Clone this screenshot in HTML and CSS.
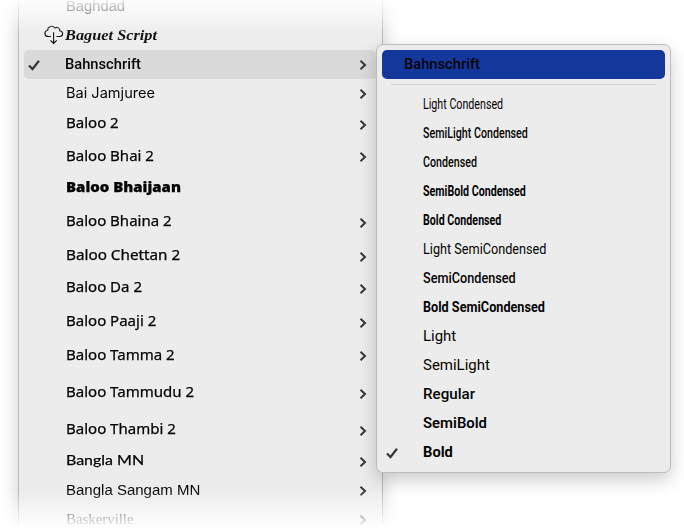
FILE: index.html
```
<!DOCTYPE html>
<html lang="en">
<head>
<meta charset="utf-8">
<title>Font menu</title>
<link rel="stylesheet" href="styles.css">
</head>
<body>
<svg class="defs" aria-hidden="true">
  <symbol id="chevron" viewBox="0 0 8 12"><path d="M1.5 1.800 6 6l-4.500 4.200" fill="none" stroke="currentColor" stroke-width="2"/></symbol>
  <symbol id="check" viewBox="0 0 12 12"><path d="M1 6.500 4.500 10 11 1.800" fill="none" stroke="currentColor" stroke-width="2.200"/></symbol>
  <symbol id="cloud" viewBox="0 0 20 20"><path d="M7 11.500H4.200C.2 11.500-.3 6 3.700 5.200C3.600 1.500 8.500-.3 11 3C13.500 1.500 16 3.300 15.700 5.700C19.700 6.300 19.500 11.500 15.800 11.500H12.500M9.600 7.300V18.300M6.500 15.300l3.100 3.200 3.100-3.200" fill="none" stroke="currentColor" stroke-width="1.100"/></symbol>
</svg>
<div class="stage">
  <div class="fade">
    <ul class="menu">
      <li class="item"><span class="label baghdad">Baghdad</span></li>
      <li class="item"><svg class="cloud"><use href="#cloud"/></svg><span class="label script">Baguet Script</span></li>
      <li class="item current"><svg class="check"><use href="#check"/></svg><span class="label din">Bahnschrift</span><svg class="chevron"><use href="#chevron"/></svg></li>
      <li class="item"><span class="label jam">Bai Jamjuree</span><svg class="chevron"><use href="#chevron"/></svg></li>
      <li class="item h32"><span class="label baloo">Baloo 2</span><svg class="chevron"><use href="#chevron"/></svg></li>
      <li class="item h32"><span class="label baloo low">Baloo Bhai 2</span><svg class="chevron"><use href="#chevron"/></svg></li>
      <li class="item h31"><span class="label baloo heavy">Baloo Bhaijaan</span></li>
      <li class="item h38"><span class="label baloo">Baloo Bhaina 2</span><svg class="chevron"><use href="#chevron"/></svg></li>
      <li class="item h30"><span class="label baloo wide">Baloo Chettan 2</span><svg class="chevron"><use href="#chevron"/></svg></li>
      <li class="item h34"><span class="label baloo">Baloo Da 2</span><svg class="chevron"><use href="#chevron"/></svg></li>
      <li class="item h34"><span class="label baloo">Baloo Paaji 2</span><svg class="chevron"><use href="#chevron"/></svg></li>
      <li class="item h33"><span class="label baloo">Baloo Tamma 2</span><svg class="chevron"><use href="#chevron"/></svg></li>
      <li class="item h42"><span class="label baloo">Baloo Tammudu 2</span><svg class="chevron"><use href="#chevron"/></svg></li>
      <li class="item h32"><span class="label baloo">Baloo Thambi 2</span><svg class="chevron"><use href="#chevron"/></svg></li>
      <li class="item h30"><span class="label bangla">Bangla MN</span><svg class="chevron"><use href="#chevron"/></svg></li>
      <li class="item"><span class="label sangam">Bangla Sangam MN</span><svg class="chevron"><use href="#chevron"/></svg></li>
      <li class="item"><span class="label baskerville">Baskerville</span><svg class="chevron"><use href="#chevron"/></svg></li>
    </ul>
  </div>
  <div class="submenu">
    <div class="heading"><span class="label din">Bahnschrift</span></div>
    <hr>
    <ul class="styles">
      <li class="item"><span class="label din cond light">Light Condensed</span></li>
      <li class="item"><span class="label din cond">SemiLight Condensed</span></li>
      <li class="item"><span class="label din cond">Condensed</span></li>
      <li class="item"><span class="label din cond bold">SemiBold Condensed</span></li>
      <li class="item"><span class="label din cond bold">Bold Condensed</span></li>
      <li class="item"><span class="label din semicond light">Light SemiCondensed</span></li>
      <li class="item"><span class="label din semicond">SemiCondensed</span></li>
      <li class="item"><span class="label din semicond bold">Bold SemiCondensed</span></li>
      <li class="item"><span class="label din light">Light</span></li>
      <li class="item"><span class="label din light">SemiLight</span></li>
      <li class="item"><span class="label din regular">Regular</span></li>
      <li class="item"><span class="label din semibold">SemiBold</span></li>
      <li class="item"><svg class="check"><use href="#check"/></svg><span class="label din bold">Bold</span></li>
    </ul>
  </div>
</div>
</body>
</html>
```
FILE: styles.css
```
* { box-sizing: border-box; }
body { margin: 0; background: #fff; color: #050505; }
ul { margin: 0; padding: 0; list-style: none; }
.defs { display: none; }

.stage { position: relative; width: 684px; height: 528px; overflow: hidden; }
.fade {
  height: 528px;
  padding-left: 18px;
  overflow: hidden;
  -webkit-mask-image: linear-gradient(rgba(0,0,0,.1), rgba(0,0,0,.92) 32px, #000 50px, #000 490px, transparent 529px);
  mask-image: linear-gradient(rgba(0,0,0,.1), rgba(0,0,0,.92) 32px, #000 50px, #000 490px, transparent 529px);
}
.menu {
  width: 365px;
  margin-top: -8px;
  padding: 0 5px;
  background: #ececec;
  border: solid #b9b9b9;
  border-width: 0 1px;
  box-shadow: 0 8px 18px rgba(0,0,0,.2);
}
.item {
  display: grid;
  grid-template-columns: 42px 1fr 25px;
  align-items: center;
  height: 29px;
  font-size: 14px;
  line-height: 20px;
  white-space: nowrap;
}
.current { background: #dadada; border-radius: 5px; }
.h30 { height: 30px; }
.h31 { height: 31px; }
.h32 { height: 32px; }
.h33 { height: 33px; }
.h34 { height: 34px; }
.h38 { height: 38px; }
.h42 { height: 42px; }

.label { --y: -1px; --w: 1; grid-column: 2; grid-row: 1; justify-self: start; transform-origin: 0 50%; transform: translateY(var(--y)) scaleX(var(--w)); }
.check { grid-column: 1; grid-row: 1; width: 12px; height: 12px; margin: 1px 0 0 4px; color: #383838; }
.cloud { grid-column: 1; grid-row: 1; width: 20px; height: 20px; margin: -1px 0 0 20px; }
.chevron { grid-column: 3; grid-row: 1; width: 8px; height: 12px; margin: 1px 0 0 7px; color: #383838; }

.baghdad { --w: 1.053; font-family: "Liberation Sans", sans-serif; }
.script { --w: 1.088; margin-left: -1px; font: italic 700 15px/20px "Liberation Serif", serif; }
.jam { --w: 1.041; font-family: Inter, sans-serif; }
.baloo { --w: 1.072; font-family: "Noto Sans", sans-serif; font-weight: 450; -webkit-text-stroke: .25px #050505; }
.baloo.low { --y: 0px; }
.baloo.heavy { --w: 1.068; font-weight: 900; }
.baloo.wide { --w: 1.09; }
.bangla { --w: 1.14; font-family: Lato, sans-serif; -webkit-text-stroke: .25px #050505; }
.sangam { --w: 1.072; font-family: "Liberation Sans", sans-serif; }
.baskerville { --y: 0px; --w: 1.06; font-family: "Liberation Serif", serif; }

.din { --w: 1.05; font-family: Roboto, sans-serif; font-weight: 500; }
.current .din { margin-left: -1px; }
.din.cond { --w: .763; }
.din.semicond { --w: .905; }
.din.light { font-weight: 400; }
.din.light:not(.cond, .semicond) { --w: 1.07; }
.din.regular { --w: 1.081; }
.din.semibold { --w: 1.063; font-weight: 600; }
.din.bold { font-weight: 700; }

.submenu {
  position: absolute;
  left: 376px;
  top: 44px;
  width: 295px;
  height: 429px;
  padding: 5px;
  background: #ececec;
  border: 1px solid #bcbcbc;
  border-radius: 7px;
  box-shadow: 0 7px 18px rgba(0,0,0,.2);
}
.heading {
  display: flex;
  align-items: center;
  height: 29px;
  padding-left: 22px;
  border-radius: 5px;
  background: #14379b;
  font-size: 14px;
  line-height: 20px;
}
hr { height: 1px; margin: 5px 9px; border: 0; background: #d2d2d2; }
.styles .item { grid-template-columns: 41px 1fr; }
```
